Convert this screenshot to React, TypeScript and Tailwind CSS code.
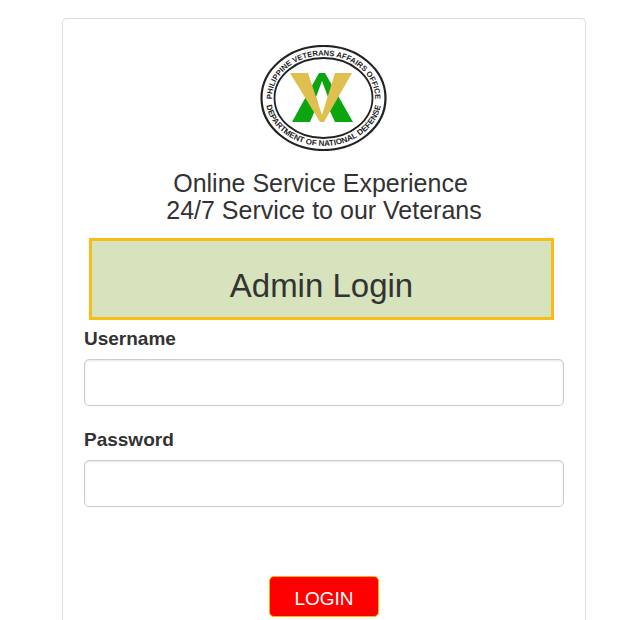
import React from "react";

function Seal() {
  return (
    <svg
      viewBox="0 0 128 106"
      className="mx-auto block h-[106px] w-[128px]"
      role="img"
      aria-label="Philippine Veterans Affairs Office seal"
    >
      <defs>
        <path id="seal-top" d="M12 53 A51.5 42.5 0 0 1 115 53" />
        <path id="seal-bottom" d="M5.5 53 A58 48 0 0 0 121.5 53" />
      </defs>
      <ellipse cx="63.5" cy="53" rx="62" ry="52" fill="#fff" stroke="#222" strokeWidth="2.2" />
      <ellipse cx="63.5" cy="53" rx="49" ry="40" fill="none" stroke="#222" strokeWidth="1.8" />
      <g fill="#222" fontFamily="'Liberation Sans', Arial, sans-serif" fontWeight="700" textAnchor="middle">
        <text fontSize="7.6">
          <textPath href="#seal-top" startOffset="50%">PHILIPPINE VETERANS AFFAIRS OFFICE</textPath>
        </text>
        <text fontSize="8">
          <textPath href="#seal-bottom" startOffset="50%">DEPARTMENT OF NATIONAL DEFENSE</textPath>
        </text>
      </g>
      <path d="M59 28 H65 L93 77 H75 L62 49 L50 77 H32 Z" fill="#0aa50f" />
      <path d="M62 36 L68 52 L62 72 L56 52 Z" fill="#fff" />
      <path d="M30 28 H48 L62 70 L75 28 H92 L64 77 H60 Z" fill="#dfbf4e" />
    </svg>
  );
}

type FieldProps = { id: string; label: string; type: string };

function Field({ id, label, type }: FieldProps) {
  return (
    <div className="mb-5">
      <label htmlFor={id} className="mb-[7px] block text-[19px] leading-[27px] font-bold">
        {label}
      </label>
      <input
        id={id}
        name={id}
        type={type}
        className="block h-[47px] w-full rounded-[5px] border border-[#ccc] bg-white px-4 text-[19px] shadow-[inset_0_1px_2px_rgba(0,0,0,0.1)] outline-none focus:border-[#66afe9]"
      />
    </div>
  );
}

export default function App() {
  return (
    <main className="flex min-h-screen flex-col bg-white pt-[18px] pr-[31px] pl-[62px] font-['Liberation_Sans',Arial,sans-serif] text-[#333]">
      <form
        className="flex-1 rounded-t-[5px] border border-b-0 border-[#ddd] px-[21px] pt-[26px] pb-[3px]"
        onSubmit={(e) => e.preventDefault()}
      >
        <Seal />
        <h2 className="mt-[19px] text-center text-[25px] leading-[27px]">
          Online Service Experience&nbsp;
          <br />
          24/7 Service to our Veterans
        </h2>
        <div className="mt-[14px] mr-[10px] ml-[5px] border-3 border-[#f9bd18] bg-[#d7e3bc] pt-[27px] pb-[13px]">
          <h1 className="text-center text-[33px] leading-9">Admin Login</h1>
        </div>
        <div className="mt-[5px]">
          <Field id="username" label="Username" type="text" />
          <Field id="password" label="Password" type="password" />
        </div>
        <button
          type="submit"
          className="mx-auto mt-[69px] block h-[41px] w-[110px] rounded-[5px] border border-[#ffb000] bg-[#ff0000] pt-[6px] text-[19px] text-white"
        >
          LOGIN
        </button>
      </form>
    </main>
  );
}
